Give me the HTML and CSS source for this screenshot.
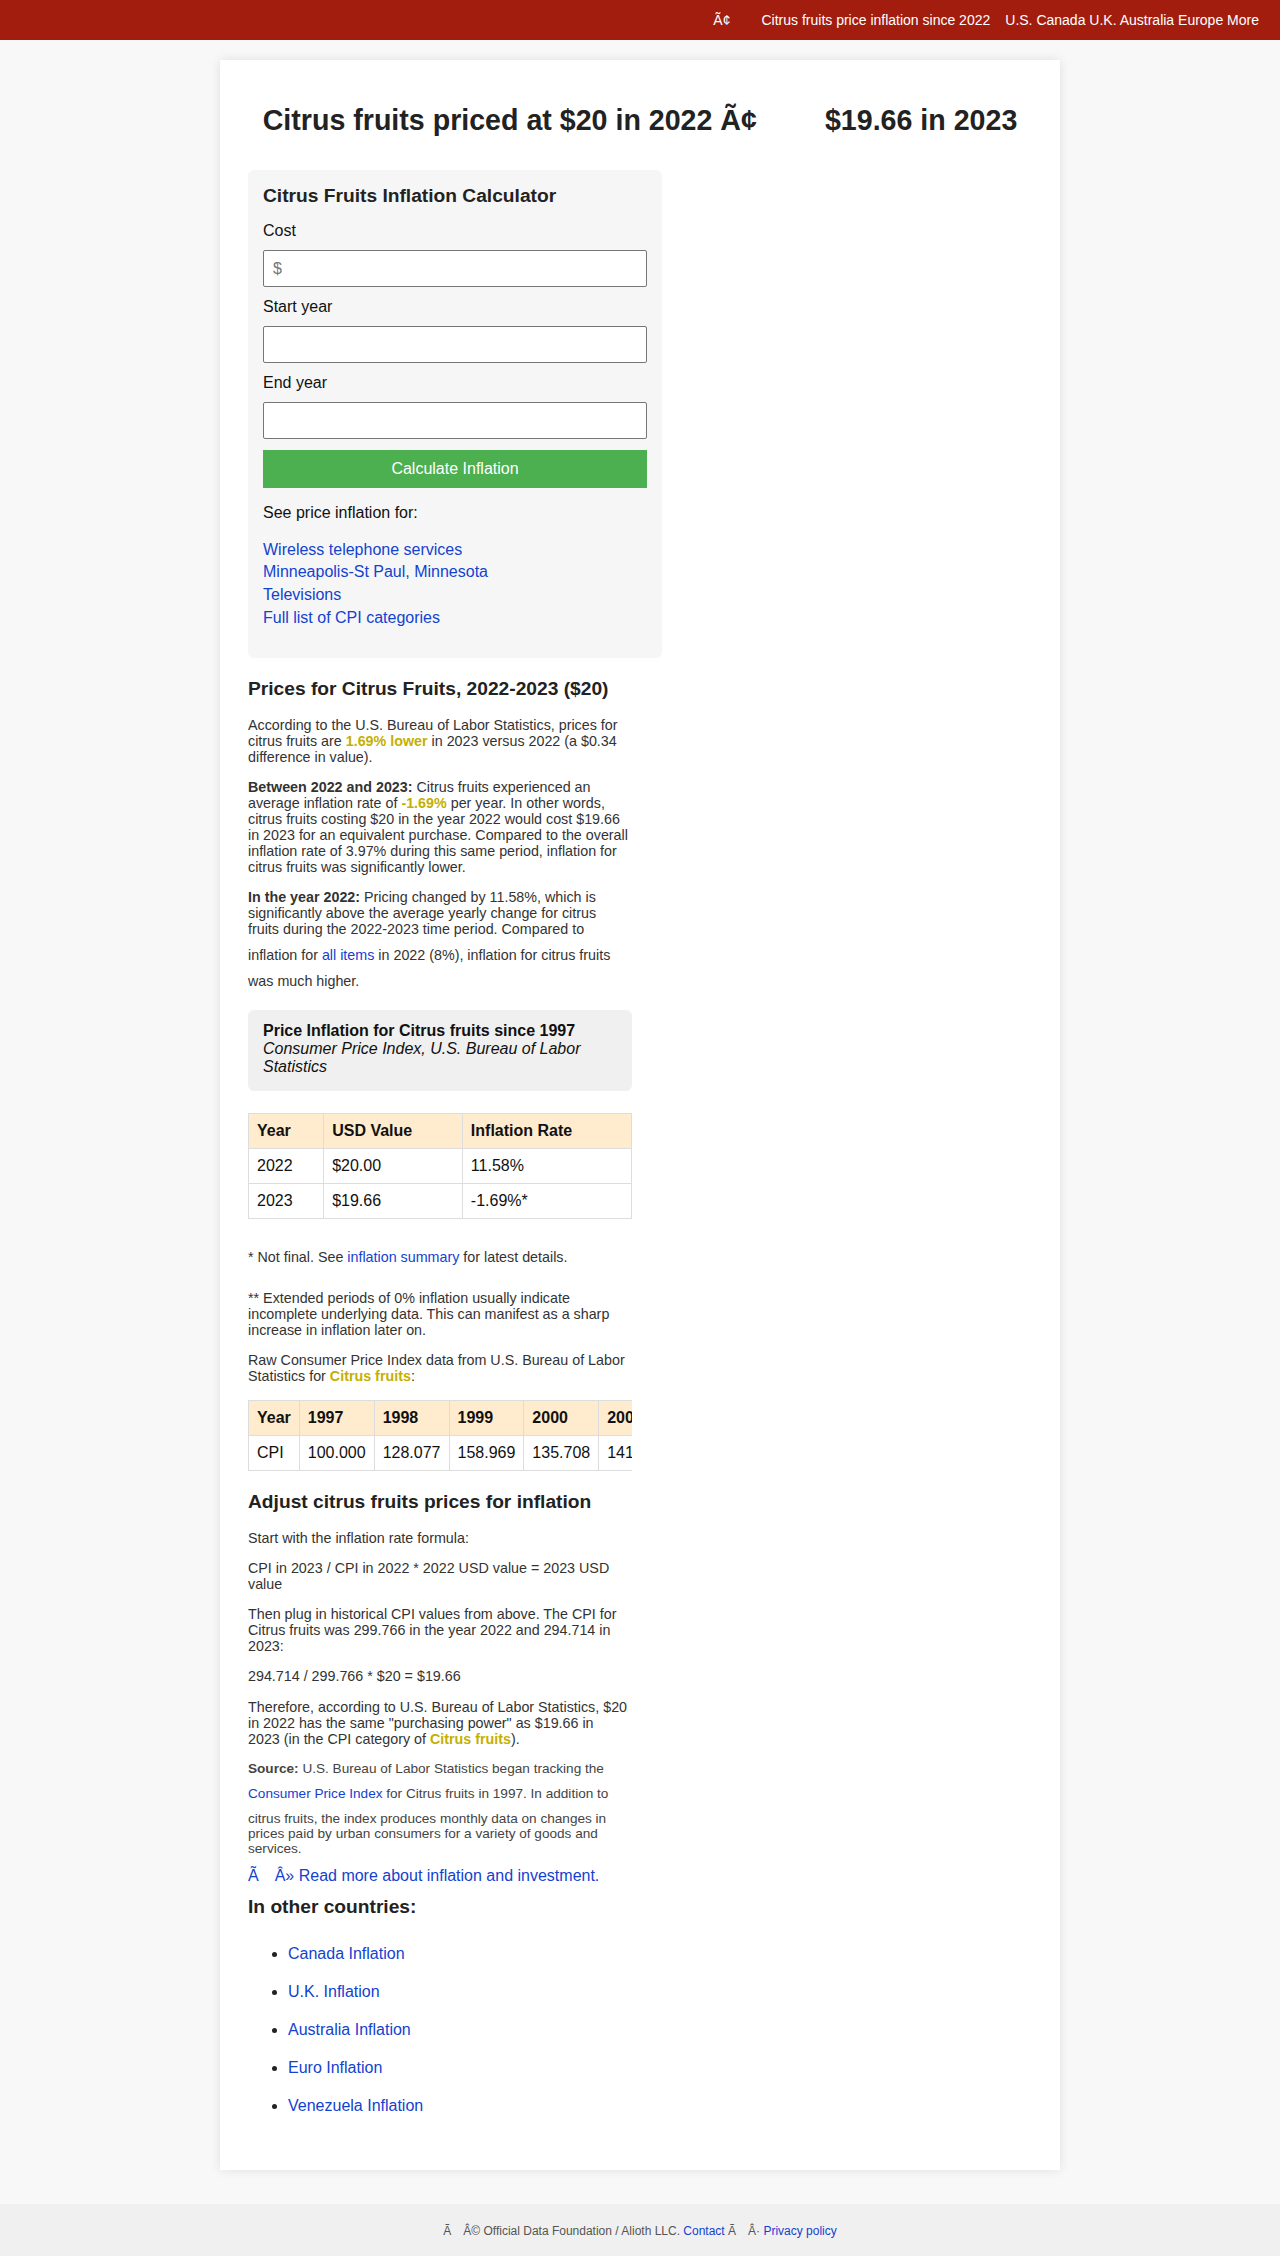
FILE: index.html
```html
<!DOCTYPE html>
<html lang="en">
<head>
<meta charset="utf-8">
<title>Citrus fruits price inflation since 2022</title>
<link rel="stylesheet" href="styles.css">
</head>
<body>
<header class="topbar">
  <nav class="topnav">
    <span class="nav-moji">Ã¢</span><span class="gap-nav"></span><a class="nav-cur" href="#">Citrus fruits price inflation since 2022</a><a href="#">U.S.</a> <a href="#">Canada</a> <a href="#">U.K.</a> <a href="#">Australia</a> <a href="#">Europe</a> <a href="#">More</a>
  </nav>
</header>

<main class="page">
  <div class="card">
    <h1 class="title">Citrus fruits priced at $20 in 2022 Ã¢<span class="gap-title"></span>$19.66 in 2023</h1>

    <div class="col">
      <form class="calc">
        <h3 class="calc-title">Citrus Fruits Inflation Calculator</h3>
        <label class="calc-label" for="cost">Cost</label>
        <input class="calc-input" id="cost" type="text" placeholder="$">
        <label class="calc-label" for="start">Start year</label>
        <input class="calc-input" id="start" type="text">
        <label class="calc-label" for="end">End year</label>
        <input class="calc-input" id="end" type="text">
        <button class="calc-btn" type="button">Calculate Inflation</button>
        <p class="calc-see">See price inflation for:</p>
        <div class="calc-links">
          <a href="#">Wireless telephone services</a>
          <a href="#">Minneapolis-St Paul, Minnesota</a>
          <a href="#">Televisions</a>
          <a href="#">Full list of CPI categories</a>
        </div>
      </form>

      <article class="article">
        <h2 class="sec-title">Prices for Citrus Fruits, 2022-2023 ($20)</h2>
        <p class="txt">According to the U.S. Bureau of Labor Statistics, prices for citrus fruits are <b class="hl">1.69% lower</b> in 2023 versus 2022 (a $0.34 difference in value).</p>
        <p class="txt"><b>Between 2022 and 2023:</b> Citrus fruits experienced an average inflation rate of <b class="hl">-1.69%</b> per year. In other words, citrus fruits costing $20 in the year 2022 would cost $19.66 in 2023 for an equivalent purchase. Compared to the overall inflation rate of 3.97% during this same period, inflation for citrus fruits was significantly lower.</p>
        <p class="txt"><b>In the year 2022:</b> Pricing changed by 11.58%, which is significantly above the average yearly change for citrus fruits during the 2022-2023 time period. Compared to inflation for <a href="#">all items</a> in 2022 (8%), inflation for citrus fruits was much higher.</p>

        <div class="note">
          <b>Price Inflation for Citrus fruits since 1997</b><br>
          <i>Consumer Price Index, U.S. Bureau of Labor Statistics</i>
        </div>

        <table class="tbl tbl-full">
          <tr><th>Year</th><th>USD Value</th><th>Inflation Rate</th></tr>
          <tr><td>2022</td><td>$20.00</td><td>11.58%</td></tr>
          <tr><td>2023</td><td>$19.66</td><td>-1.69%*</td></tr>
        </table>

        <p class="txt">* Not final. See <a href="#">inflation summary</a> for latest details.</p>
        <p class="txt">** Extended periods of 0% inflation usually indicate incomplete underlying data. This can manifest as a sharp increase in inflation later on.</p>
        <p class="txt">Raw Consumer Price Index data from U.S. Bureau of Labor Statistics for <b class="hl">Citrus fruits</b>:</p>

        <div class="tbl-wrap">
          <table class="tbl">
            <tr><th>Year</th><th>1997</th><th>1998</th><th>1999</th><th>2000</th><th>2001</th><th>2002</th><th>2003</th><th>2004</th><th>2005</th><th>2006</th><th>2007</th><th>2008</th><th>2009</th><th>2010</th></tr>
            <tr><td>CPI</td><td>100.000</td><td>128.077</td><td>158.969</td><td>135.708</td><td>141.245</td><td>150.306</td><td>152.418</td><td>160.720</td><td>176.883</td><td>200.614</td><td>236.142</td><td>219.530</td><td>212.075</td><td>225.961</td></tr>
          </table>
        </div>

        <h2 class="sec-title">Adjust citrus fruits prices for inflation</h2>
        <p class="txt">Start with the inflation rate formula:</p>
        <p class="txt">CPI in 2023 / CPI in 2022 * 2022 USD value = 2023 USD value</p>
        <p class="txt">Then plug in historical CPI values from above. The CPI for Citrus fruits was 299.766 in the year 2022 and 294.714 in 2023:</p>
        <p class="txt">294.714 / 299.766 * $20 = $19.66</p>
        <p class="txt">Therefore, according to U.S. Bureau of Labor Statistics, $20 in 2022 has the same "purchasing power" as $19.66 in 2023 (in the CPI category of <b class="hl">Citrus fruits</b>).</p>
        <p class="txt source"><b>Source:</b> U.S. Bureau of Labor Statistics began tracking the <a href="#">Consumer Price Index</a> for Citrus fruits in 1997. In addition to citrus fruits, the index produces monthly data on changes in prices paid by urban consumers for a variety of goods and services.</p>

        <a class="readmore" href="#">Ã<span class="gap-1em"></span>Â» Read more about inflation and investment.</a>

        <h3 class="sec-title other">In other countries:</h3>
        <ul class="countries">
          <li><a href="#">Canada Inflation</a></li>
          <li><a href="#">U.K. Inflation</a></li>
          <li><a href="#">Australia Inflation</a></li>
          <li><a href="#">Euro Inflation</a></li>
          <li><a href="#">Venezuela Inflation</a></li>
        </ul>
      </article>
    </div>
  </div>
</main>

<footer class="footer">
  Ã<span class="gap-1em"></span>Â© Official Data Foundation / Alioth LLC. <a href="#">Contact</a> Ã<span class="gap-1em"></span>Â· <a href="#">Privacy policy</a>
</footer>
</body>
</html>
```

FILE: styles.css
```css
html, body {
  margin: 0;
  padding: 0;
}

body {
  background: #f8f8f8;
  font-family: "Liberation Sans", Arial, Helvetica, sans-serif;
  color: #222;
}

a {
  color: #1342d0;
  text-decoration: none;
}

/* ---------- top bar ---------- */
.topbar {
  height: 40px;
  background: #a31d0e;
  color: #fff;
  font-size: 14px;
  line-height: 40px;
  display: flex;
  justify-content: flex-end;
  padding-right: 21px;
}

.topnav {
  white-space: nowrap;
}

.topnav a {
  color: #fff;
}

.gap-nav {
  display: inline-block;
  width: 31px;
}

.nav-cur {
  margin-right: 15px;
}

/* ---------- card ---------- */
.card {
  width: 840px;
  box-sizing: border-box;
  margin: 20px auto 0;
  padding: 28px 28px 29px;
  background: #fff;
  box-shadow: 0 0 10px rgba(0, 0, 0, 0.1);
}

.title {
  margin: 16px 0 33px;
  font-size: 28.6px;
  line-height: 33px;
  font-weight: bold;
  text-align: center;
  white-space: nowrap;
  color: #222;
}

.gap-title {
  display: inline-block;
  width: 68px;
}

.gap-1em {
  display: inline-block;
  width: 1em;
}

/* ---------- calculator ---------- */
.calc {
  width: 414px;
  box-sizing: border-box;
  background: #f6f6f6;
  border-radius: 6px;
  padding: 15px;
  margin: 0;
}

.calc-title {
  margin: 0 0 14px;
  font-size: 19.2px;
  line-height: 22px;
  color: #222;
}

.calc-label {
  display: block;
  font-size: 16px;
  line-height: 19px;
  margin-bottom: 10px;
  color: #111;
}

.calc-input {
  display: block;
  width: 100%;
  box-sizing: border-box;
  height: 37px;
  margin: 0 0 10px;
  padding: 0 9px;
  border: 1px solid #767676;
  border-radius: 2px;
  background: #fff;
  font-family: "Liberation Sans", Arial, sans-serif;
  font-size: 16px;
  color: #222;
}

.calc-input::placeholder {
  color: #757575;
}

.calc-btn {
  display: block;
  width: 100%;
  height: 38px;
  margin: 11px 0 0;
  border: 0;
  background: #4caf50;
  color: #fff;
  font-family: "Liberation Sans", Arial, sans-serif;
  font-size: 16px;
}

.calc-see {
  margin: 15.5px 0 17px;
  font-size: 16px;
  color: #111;
}

.calc-links {
  margin-bottom: 14px;
}

.calc-links a {
  display: block;
  font-size: 16px;
  line-height: 22.7px;
}

/* ---------- article ---------- */
.article {
  width: 384px;
}

.sec-title {
  margin: 20px 0 16.5px;
  font-size: 19.2px;
  line-height: 22px;
  font-weight: bold;
  color: #222;
}

.txt {
  max-width: 381px;
  margin: 14.3px 0;
  font-size: 14.3px;
  line-height: 16px;
  color: #333;
}

.txt a {
  line-height: 36px;
}

.txt b {
  color: #333;
}

.txt b.hl {
  color: #c4b000;
}

.note {
  margin: 21px 0 22px;
  padding: 12px 15px 15px;
  background: #f0f0f0;
  border-radius: 6px;
  font-size: 16px;
  color: #111;
}

.tbl {
  border-collapse: collapse;
  font-size: 16px;
  color: #111;
  margin: 0 0 20px;
}

.tbl-full {
  width: 100%;
}

.tbl th,
.tbl td {
  border: 1px solid #ddd;
  padding: 8px;
  text-align: left;
  white-space: nowrap;
}

.tbl th {
  background: #ffebcd;
}

.tbl-wrap {
  margin-top: 16px;
  overflow: hidden;
}

.tbl-wrap .tbl {
  margin: 0;
}

.source {
  margin-bottom: 11px;
  font-size: 13.6px;
  line-height: 15px;
  color: #444;
}

.source a {
  line-height: 35px;
}

.source b {
  color: #444;
}

.readmore {
  display: block;
  margin-top: 11px;
  font-size: 16px;
}

.sec-title.other {
  margin: 11px 0 17px;
}

.countries {
  margin: 0 0 16px;
  padding-left: 40px;
}

.countries li {
  font-size: 16px;
  line-height: 38px;
  color: #222;
}

/* ---------- footer ---------- */
.footer {
  margin-top: 34px;
  padding: 20px 0;
  background: #f0f0f0;
  font-size: 12px;
  line-height: 14px;
  color: #555;
  text-align: center;
}
```
